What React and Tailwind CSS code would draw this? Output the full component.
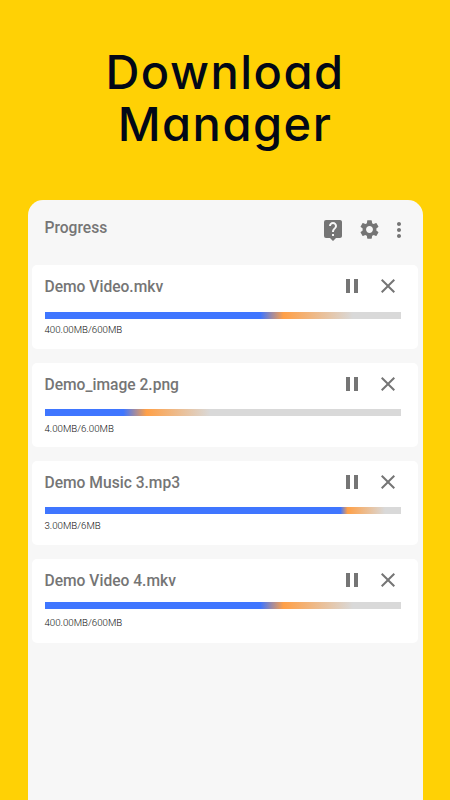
import { MdLiveHelp, MdSettings, MdMoreVert, MdPause, MdClose } from 'react-icons/md'

const downloads = [
  {
    name: 'Demo Video.mkv',
    size: '400.00MB/600MB',
    bar: 'mt-[13px] bg-[linear-gradient(90deg,#3f76ff_60.5%,#ffa047_67%,#d9d9d9_86.5%)]',
    label: 'mt-1',
  },
  {
    name: 'Demo_image 2.png',
    size: '4.00MB/6.00MB',
    bar: 'mt-3 bg-[linear-gradient(90deg,#3f76ff_22%,#ffa047_28.5%,#d9d9d9_46.5%)]',
    label: 'mt-1.5',
  },
  {
    name: 'Demo Music 3.mp3',
    size: '3.00MB/6MB',
    bar: 'mt-3 bg-[linear-gradient(90deg,#3f76ff_83%,#ffa047_85%,#d9d9d9_95.5%)]',
    label: 'mt-[5px]',
  },
  {
    name: 'Demo Video 4.mkv',
    size: '400.00MB/600MB',
    bar: 'mt-[9px] bg-[linear-gradient(90deg,#3f76ff_60.5%,#ffa047_67%,#d9d9d9_86.5%)]',
    label: 'mt-[7px]',
  },
]

function DownloadCard({ item }) {
  return (
    <div className="h-[84.5px] rounded-[5px] bg-white pl-[12.5px] pr-[17px] pt-[9px]">
      <div className="flex h-[25px] items-center text-[#757575]">
        <h3 className="flex-1 pt-0.5 text-[15.6px] font-medium leading-[25px]">{item.name}</h3>
        <button className="mr-3 -mt-px"><MdPause size={24} /></button>
        <button className="mr-[1.5px] -mt-px"><MdClose size={24} /></button>
      </div>
      <div className={`h-[7px] ${item.bar}`} />
      <p className={`text-[9.7px] font-light leading-[14px] text-[#111] ${item.label}`}>{item.size}</p>
    </div>
  )
}

export default function App() {
  return (
    <div className="flex h-[800px] w-[450px] flex-col overflow-hidden bg-[#ffd105] font-['Roboto',sans-serif]">
      <h1
        className="pt-[46px] text-center font-['Inter',sans-serif] text-[47px] font-medium leading-[52px] tracking-[1.5px] text-[#020817]"
        style={{ fontFeatureSettings: '"cv11" 1' }}
      >
        Download
        <br />
        Manager
      </h1>
      <div className="ml-[27.5px] mt-[49.5px] w-[395.5px] flex-1 rounded-t-[15px] bg-[#f7f7f7] pl-[4.5px] pr-[5px]">
        <div className="flex h-[65px] items-center pb-[5px] pl-[12.5px] pr-[7px] text-[#757575]">
          <h2 className="flex-1 -mt-px text-[15.6px] font-medium">Progress</h2>
          <MdLiveHelp size={24} className="mr-[12.5px]" />
          <MdSettings size={23} className="mr-[6.5px]" />
          <MdMoreVert size={24} />
        </div>
        <div className="flex flex-col gap-[13.6px]">
          {downloads.map(item => <DownloadCard key={item.name} item={item} />)}
        </div>
      </div>
    </div>
  )
}
